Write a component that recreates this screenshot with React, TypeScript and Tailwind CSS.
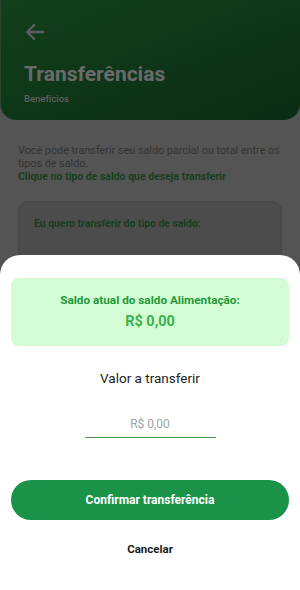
import React from "react";

export default function App() {
  return (
    <div
      className="relative w-[300px] h-[590px] overflow-hidden bg-[#545454]"
      style={{ fontFamily: "Roboto, 'Noto Sans', sans-serif" }}
    >
      {/* Header */}
      <div className="h-[120px] rounded-b-[16px] bg-gradient-to-br from-[#123f1c] to-[#0b2d15] px-[23px] pt-[21px] border-l border-[#2a4430]">
        <svg width="22" height="22" viewBox="0 0 24 24" fill="none" stroke="#5c5c5c" strokeWidth="2.6" strokeLinecap="round" strokeLinejoin="round">
          <path d="M21 12H3.5M11 4.5L3.5 12l7.5 7.5" />
        </svg>
        <div className="mt-[18px] text-[21px] leading-[26px] font-bold text-[#6a6a6a]">Transferências</div>
        <div className="mt-[6px] text-[9.5px] leading-[12px] font-medium text-[#5f5f5f]">Benefícios</div>
      </div>

      {/* Body */}
      <div className="px-[18px] pt-[24px]">
        <p className="text-[10.8px] leading-[13px] text-[#333333]">
          Você pode transferir seu saldo parcial ou total entre os tipos de saldo.
        </p>
        <p className="text-[10.5px] leading-[13px] font-bold text-[#173f1d]">
          Clique no tipo de saldo que deseja transferir
        </p>
        <div className="mt-[18px] h-[100px] rounded-[10px] border border-[#474747] bg-[#4c4c4c] px-[15px] pt-[15px]">
          <p className="text-[10.4px] leading-[14px] font-bold text-[#173f1d]">
            Eu quero transferir do tipo de saldo:
          </p>
        </div>
      </div>

      {/* Bottom sheet */}
      <div className="absolute left-0 right-0 bottom-0 h-[335px] rounded-t-[20px] bg-white px-[11px] pt-[23px] flex flex-col items-center">
        <div className="w-full h-[68px] rounded-[8px] bg-[#d3fcd5] flex flex-col items-center justify-center">
          <div className="text-[11.75px] leading-[14px] font-bold text-[#1f9a3a]">Saldo atual do saldo Alimentação:</div>
          <div className="mt-[6px] text-[14.5px] leading-[18px] font-bold text-[#3cb14f]">R$ 0,00</div>
        </div>
        <div className="mt-[23px] text-[13.5px] leading-[18px] text-[#1e1e1e]">Valor a transferir</div>
        <div className="mt-[30px] w-[131px] border-b border-[#4a9a4a] pb-[6px] text-center text-[12px] leading-[14px] text-[#a0a4a8]">
          R$ 0,00
        </div>
        <button className="mt-[42px] w-full h-[40px] rounded-full bg-[#1a9247] text-white text-[12px] font-bold">
          Confirmar transferência
        </button>
        <div className="mt-[22px] text-[11.5px] leading-[14px] font-bold text-[#1a1a1a]">Cancelar</div>
      </div>
    </div>
  );
}
